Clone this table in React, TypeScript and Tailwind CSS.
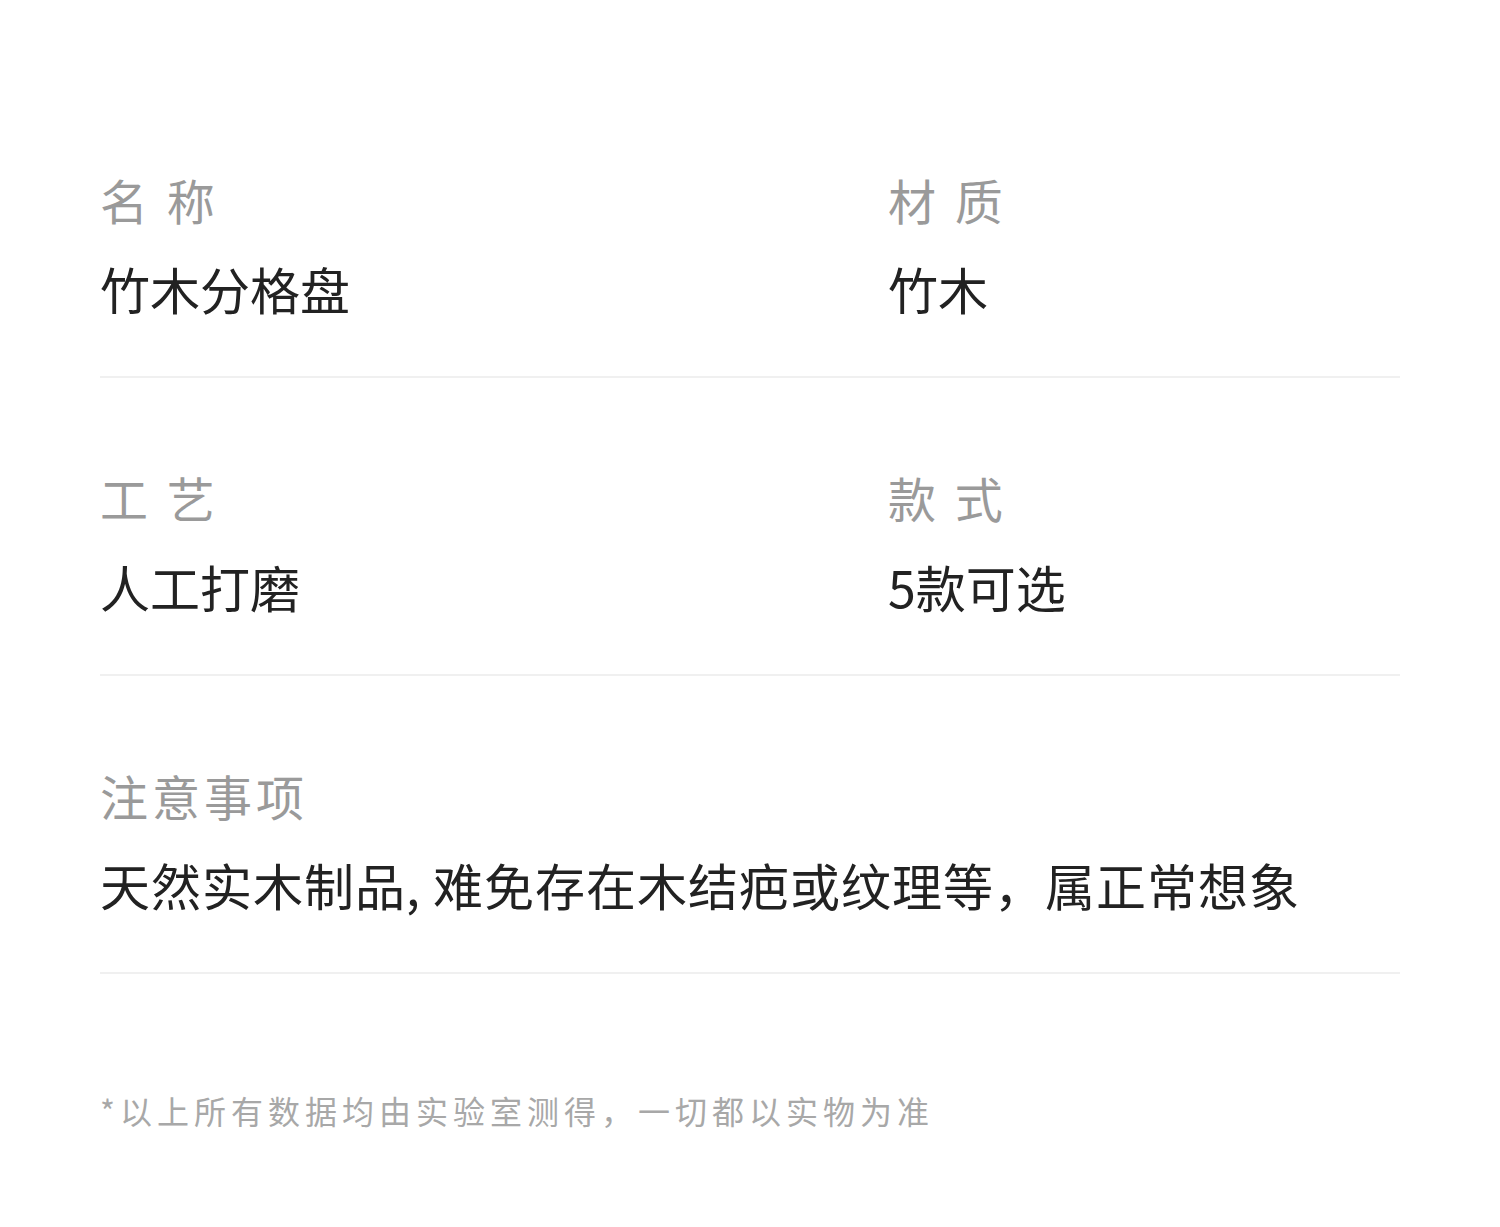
const font = "font-['Noto_Sans_CJK_SC','Noto_Sans',sans-serif]";

function Label({ text }: { text: string }) {
  return <div className="h-[60px] text-[48px] leading-[60px] tracking-[4px] text-[#9a9a9a] whitespace-pre">{text}</div>;
}

function Value({ text, wide }: { text: string; wide?: boolean }) {
  return (
    <div className={`mt-[29px] h-[60px] text-[50px] leading-[60px] text-[#222222] whitespace-nowrap ${wide ? "tracking-[1px]" : ""}`}>
      {text}
    </div>
  );
}

function Cell({ label, value }: { label: string; value: string }) {
  return (
    <div className="flex flex-col">
      <Label text={label} />
      <Value text={value} />
    </div>
  );
}

function Row({ children }: { children: React.ReactNode }) {
  return <div className="pt-[89px] pb-[58px] border-b-2 border-[#f0f0f0]">{children}</div>;
}

export default function App() {
  return (
    <div className={`${font} w-[1500px] h-[1227px] bg-white px-[100px] pt-[80px]`}>
      <Row>
        <div className="grid grid-cols-[788px_1fr]">
          <Cell label="名 称" value="竹木分格盘" />
          <Cell label="材 质" value="竹木" />
        </div>
      </Row>
      <Row>
        <div className="grid grid-cols-[788px_1fr]">
          <Cell label="工 艺" value="人工打磨" />
          <Cell label="款 式" value="5款可选" />
        </div>
      </Row>
      <Row>
        <div className="flex flex-col">
          <Label text="注意事项" />
          <Value wide text="天然实木制品, 难免存在木结疤或纹理等，属正常想象" />
        </div>
      </Row>
      <p className="mt-[116px] text-[32px] leading-[40px] tracking-[5px] text-[#a8a8a8]">
        *以上所有数据均由实验室测得，一切都以实物为准
      </p>
    </div>
  );
}
